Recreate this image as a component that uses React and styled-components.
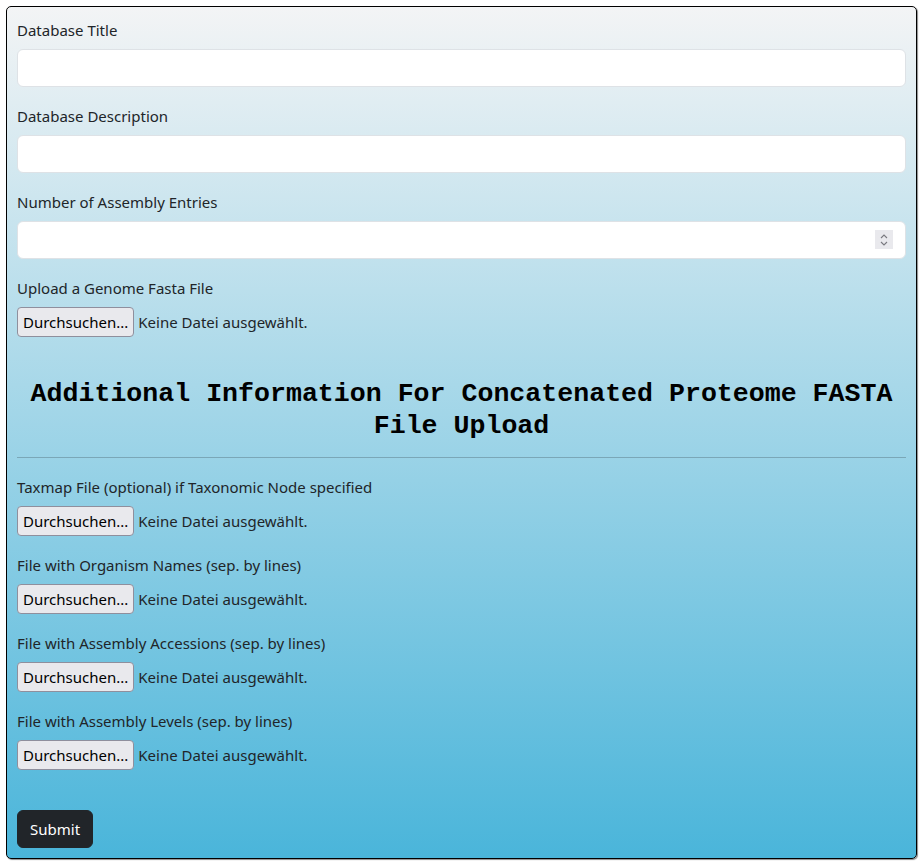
import React from 'react';
import styled, { createGlobalStyle } from 'styled-components';

const GlobalStyle = createGlobalStyle`
  * {
    box-sizing: border-box;
  }

  body {
    margin: 0;
    font-family: "Segoe UI", "Noto Sans", sans-serif;
    font-size: 15px;
    line-height: 24px;
    color: #212529;
    background: #fff;
  }
`;

const Page = styled.div`
  padding: 6px;
`;

const StyledForm = styled.form`
  padding: 10px;
  border: 1px solid #000;
  border-radius: 5px;
  box-shadow: 1px 1px 1px rgba(0, 0, 0, 0.45);
  background: linear-gradient(to bottom, #f3f4f5 0%, #4ab5da 100%);
`;

const Group = styled.div`
  margin-bottom: 16px;
`;

const Label = styled.label`
  display: block;
  padding-top: 1px;
  height: 24px;
  margin-bottom: 8px;
  line-height: 24px;
`;

const InputWrap = styled.div`
  position: relative;
`;

const TextInput = styled.input`
  display: block;
  width: 100%;
  height: 38px;
  padding: 6px 12px;
  font: inherit;
  color: #212529;
  background: #fff;
  border: 1px solid #dee2e6;
  border-radius: 6px;
  appearance: none;

  &::-webkit-inner-spin-button,
  &::-webkit-outer-spin-button {
    -webkit-appearance: none;
    margin: 0;
  }
`;

const Spinner = styled.span`
  position: absolute;
  top: 9px;
  right: 13px;
  width: 18px;
  height: 19px;
  display: flex;
  align-items: center;
  justify-content: center;
  background: #e9e9ed;
  pointer-events: none;
`;

const FileRow = styled.div`
  display: flex;
  align-items: center;
  gap: 4px;
`;

const FileButton = styled.label`
  display: inline-block;
  height: 30px;
  padding: 2px 5px;
  line-height: 24px;
  background: #e9e9ed;
  border: 1px solid #8f8f9d;
  border-radius: 4px;
  color: #000;
  cursor: default;

  input {
    display: none;
  }
`;

const NoFile = styled.span`
  color: #212529;
`;

const Heading = styled.h3`
  margin: 40px 0 0;
  padding-top: 2px;
  font-family: "Courier New", "Liberation Mono", monospace;
  font-weight: 700;
  font-size: 26.6px;
  line-height: 1.2;
  text-align: center;
  color: #000;
`;

const Rule = styled.hr`
  margin: 14px 0 16px;
  border: 0;
  border-top: 1px solid rgba(33, 37, 41, 0.25);
`;

const Spacer = styled.div`
  height: 24px;
`;

const SubmitButton = styled.button`
  display: inline-block;
  height: 38px;
  padding: 6px 12px;
  font: inherit;
  color: #fff;
  background: #212529;
  border: 1px solid #212529;
  border-radius: 6px;
`;

const FileInput = ({ label }) => (
  <Group>
    <Label>{label}</Label>
    <FileRow>
      <FileButton>
        Durchsuchen...
        <input type="file" />
      </FileButton>
      <NoFile>Keine Datei ausgewählt.</NoFile>
    </FileRow>
  </Group>
);

const SpinIcon = () => (
  <svg width="10" height="14" viewBox="0 0 10 14" fill="none" stroke="#7a7a80" strokeWidth="1.1">
    <path d="M2 5 L5 2 L8 5" />
    <path d="M2 9 L5 12 L8 9" />
  </svg>
);

const App = () => (
  <Page>
    <GlobalStyle />
    <StyledForm onSubmit={(e) => e.preventDefault()}>
      <Group>
        <Label>Database Title</Label>
        <TextInput type="text" />
      </Group>

      <Group>
        <Label>Database Description</Label>
        <TextInput type="text" />
      </Group>

      <Group>
        <Label>Number of Assembly Entries</Label>
        <InputWrap>
          <TextInput type="number" />
          <Spinner>
            <SpinIcon />
          </Spinner>
        </InputWrap>
      </Group>

      <FileInput label="Upload a Genome Fasta File" />

      <Heading>Additional Information For Concatenated Proteome FASTA File Upload</Heading>
      <Rule />

      <FileInput label="Taxmap File (optional) if Taxonomic Node specified" />
      <FileInput label="File with Organism Names (sep. by lines)" />
      <FileInput label="File with Assembly Accessions (sep. by lines)" />
      <FileInput label="File with Assembly Levels (sep. by lines)" />

      <Spacer />
      <SubmitButton type="submit">Submit</SubmitButton>
    </StyledForm>
  </Page>
);

export default App;
